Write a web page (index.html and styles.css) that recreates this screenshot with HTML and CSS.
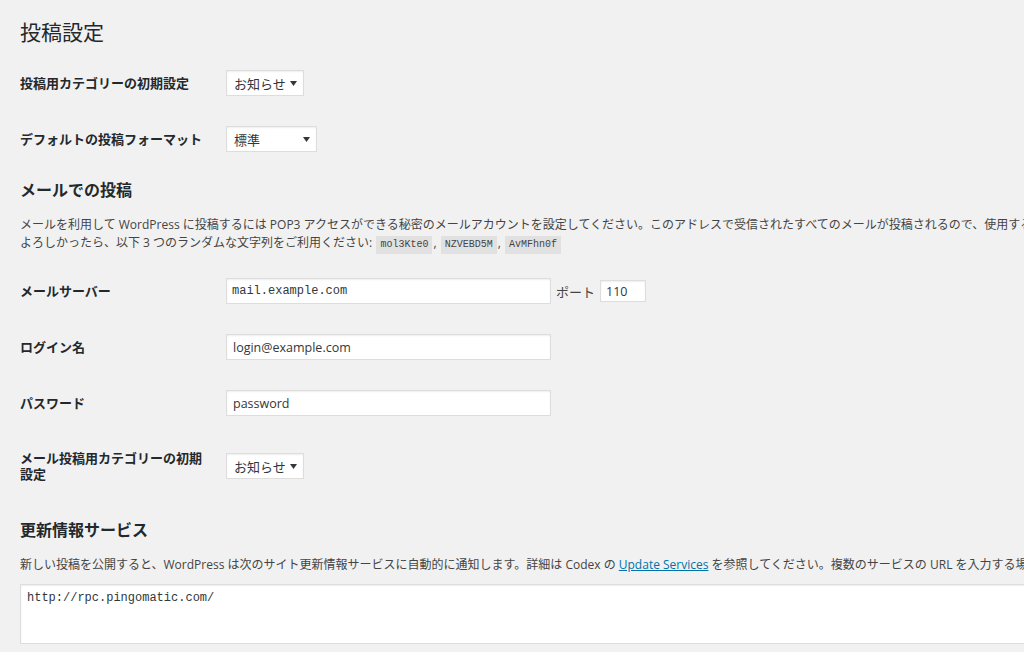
FILE: index.html
```html
<!DOCTYPE html>
<html lang="ja">
<head>
<meta charset="utf-8">
<title>投稿設定</title>
<link rel="stylesheet" href="styles.css">
</head>
<body>
<div class="wrap">
  <h1 class="page-title">投稿設定</h1>

  <div class="form">
    <div class="row">
      <div class="label">投稿用カテゴリーの初期設定</div>
      <div class="field">
        <div class="select select-cat"><span>お知らせ</span><svg class="arrow" width="7" height="5" viewBox="0 0 7 5"><path d="M0 0h7L3.5 5z" fill="#32373c"/></svg></div>
      </div>
    </div>
    <div class="row">
      <div class="label">デフォルトの投稿フォーマット</div>
      <div class="field">
        <div class="select select-format"><span>標準</span><svg class="arrow" width="7" height="5" viewBox="0 0 7 5"><path d="M0 0h7L3.5 5z" fill="#32373c"/></svg></div>
      </div>
    </div>
  </div>

  <h2 class="section-title">メールでの投稿</h2>
  <p class="desc">メールを利用して WordPress に投稿するには POP3 アクセスができる秘密のメールアカウントを設定してください。このアドレスで受信されたすべてのメールが投稿されるので、使用するアドレスは秘密にしておいてください。<br>よろしかったら、以下 3 つのランダムな文字列をご利用ください: <code>mol3Kte0</code>, <code>NZVEBD5M</code>, <code>AvMFhn0f</code></p>

  <div class="form">
    <div class="row">
      <div class="label">メールサーバー</div>
      <div class="field">
        <input class="text text-mono" type="text" value="mail.example.com">
        <span class="port-label">ポート</span>
        <input class="text text-port" type="text" value="110">
      </div>
    </div>
    <div class="row">
      <div class="label">ログイン名</div>
      <div class="field">
        <input class="text" type="text" value="login@example.com">
      </div>
    </div>
    <div class="row">
      <div class="label">パスワード</div>
      <div class="field">
        <input class="text" type="text" value="password">
      </div>
    </div>
    <div class="row row-tall">
      <div class="label label-wrap">メール投稿用カテゴリーの初期設定</div>
      <div class="field">
        <div class="select select-cat"><span>お知らせ</span><svg class="arrow" width="7" height="5" viewBox="0 0 7 5"><path d="M0 0h7L3.5 5z" fill="#32373c"/></svg></div>
      </div>
    </div>
  </div>

  <h2 class="section-title section-title-2">更新情報サービス</h2>
  <p class="desc desc-2">新しい投稿を公開すると、WordPress は次のサイト更新情報サービスに自動的に通知します。詳細は Codex の <a href="#">Update Services</a> を参照してください。複数のサービスの URL を入力する場合は改行で区切ってください。</p>
  <textarea class="ping" rows="3">http://rpc.pingomatic.com/</textarea>
</div>
</body>
</html>
```

FILE: styles.css
```css
html {
  overflow: hidden;
  background: #f1f1f1;
}
body {
  margin: 0;
  background: #f1f1f1;
  color: #444;
  font-family: "Open Sans", "Noto Sans CJK JP", sans-serif;
  font-size: 12px;
}
.wrap {
  width: 1300px;
  padding: 18px 20px 0 20px;
}
.page-title {
  margin: 0;
  font-size: 21px;
  line-height: 28px;
  font-weight: 400;
  color: #23282d;
}
.form {
  margin-top: 9px;
}
.row {
  display: flex;
  align-items: center;
  padding: 15px 0;
}
.row-tall {
  padding-top: 19px;
}
.label {
  width: 206px;
  flex: none;
  font-size: 13px;
  line-height: 16px;
  font-weight: 700;
  color: #23282d;
}
.label-wrap {
  width: 190px;
  margin-right: 16px;
}
.field {
  display: flex;
  align-items: center;
}
.select {
  box-sizing: border-box;
  height: 26px;
  display: flex;
  align-items: center;
  justify-content: space-between;
  padding: 0 6px 0 7px;
  background: #fff;
  border: 1px solid #ddd;
  box-shadow: inset 0 1px 2px rgba(0, 0, 0, .07);
  font-size: 13px;
  color: #32373c;
}
.select-cat {
  width: 78px;
}
.select-format {
  width: 91px;
}
.text {
  box-sizing: border-box;
  width: 325px;
  height: 26px;
  margin: 0;
  padding: 0 6px;
  background: #fff;
  border: 1px solid #ddd;
  border-radius: 0;
  box-shadow: inset 0 1px 2px rgba(0, 0, 0, .07);
  font-family: "Open Sans", "Noto Sans CJK JP", sans-serif;
  font-size: 12.5px;
  color: #32373c;
  outline: none;
}
.text-mono {
  font-family: "Liberation Mono", monospace;
  font-size: 12px;
  padding-left: 5px;
}
.port-label {
  margin: 0 5px 0 5px;
  font-size: 13px;
  color: #444;
}
.text-port {
  width: 46px;
  height: 22px;
  padding: 0 5px;
}
.section-title {
  margin: 12px 0 15px;
  font-size: 16px;
  line-height: 22px;
  font-weight: 700;
  color: #23282d;
}
.section-title-2 {
  margin-top: 22px;
}
.desc {
  margin: 0 0 9px;
  font-size: 12px;
  line-height: 18px;
  white-space: nowrap;
  color: #444;
}
.desc code {
  display: inline-block;
  padding: 0 4px;
  margin: 0 1px;
  background: #e1e1e1;
  font-family: "Liberation Mono", monospace;
  font-size: 10px;
  line-height: 18px;
  color: #444;
}
.desc a {
  color: #0073aa;
  text-decoration: underline;
}
.desc-2 {
  margin: 0 0 10px;
}
.ping {
  display: block;
  box-sizing: border-box;
  width: 1200px;
  height: 60px;
  margin: 0;
  padding: 5px 6px;
  background: #fff;
  border: 1px solid #ddd;
  border-radius: 0;
  box-shadow: inset 0 1px 2px rgba(0, 0, 0, .07);
  font-family: "Liberation Mono", monospace;
  font-size: 12px;
  line-height: 16px;
  color: #32373c;
  resize: none;
  outline: none;
}
```
